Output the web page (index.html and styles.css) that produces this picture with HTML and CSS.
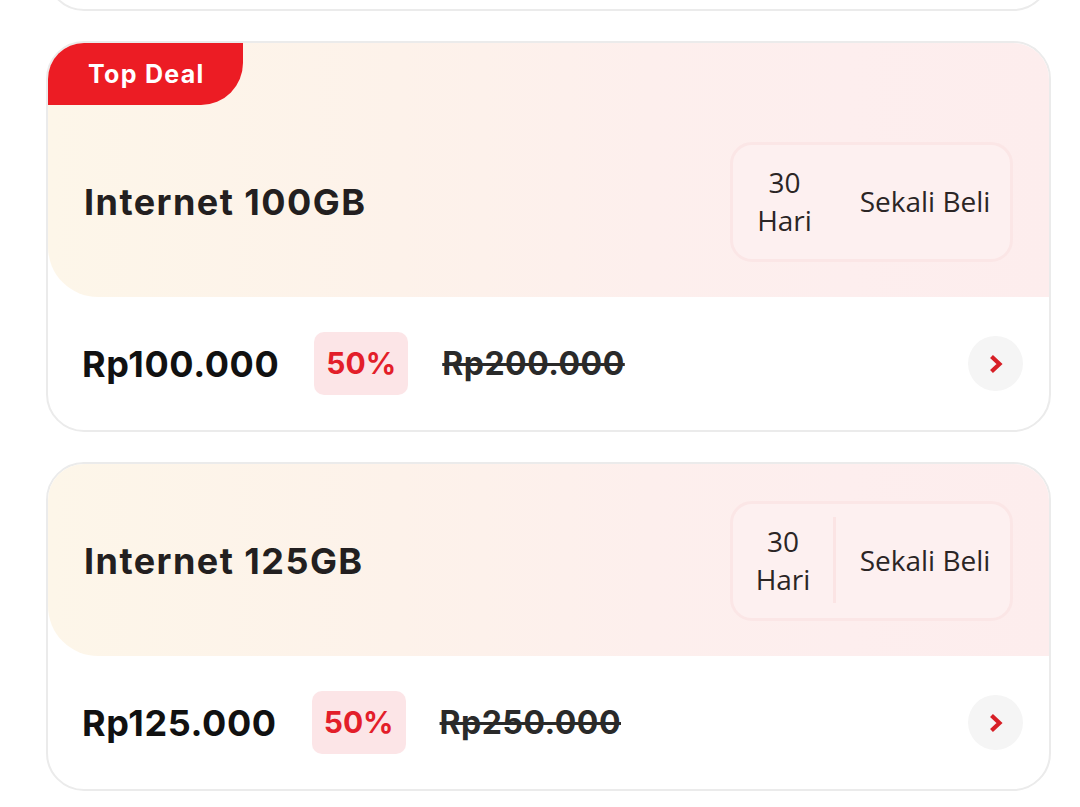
FILE: index.html
```html
<!DOCTYPE html>
<html lang="id">
<head>
<meta charset="utf-8">
<title>Paket Internet</title>
<link rel="stylesheet" href="styles.css">
</head>
<body>
<div class="list">
  <div class="card card-prev"></div>

  <div class="card">
    <div class="head">
      <div class="badge">Top Deal</div>
      <div class="head-row">
        <h2 class="title">Internet 100GB</h2>
        <div class="info">
          <div class="info-col info-days">30<br>Hari</div>
          <div class="info-col info-type">Sekali Beli</div>
        </div>
      </div>
    </div>
    <div class="foot">
      <span class="price">Rp100.000</span>
      <span class="disc">50%</span>
      <span class="old">Rp200.000</span>
      <button class="go" aria-label="Detail">
        <svg width="16" height="20" viewBox="0 0 16 20"><path d="M3.5 2.5 L11.5 10 L3.5 17.5" fill="none" stroke="#d71f26" stroke-width="4.2" stroke-linejoin="miter"/></svg>
      </button>
    </div>
  </div>

  <div class="card">
    <div class="head">
      <div class="head-row">
        <h2 class="title">Internet 125GB</h2>
        <div class="info">
          <div class="info-col info-days info-divided">30<br>Hari</div>
          <div class="info-col info-type">Sekali Beli</div>
        </div>
      </div>
    </div>
    <div class="foot">
      <span class="price">Rp125.000</span>
      <span class="disc">50%</span>
      <span class="old">Rp250.000</span>
      <button class="go" aria-label="Detail">
        <svg width="16" height="20" viewBox="0 0 16 20"><path d="M3.5 2.5 L11.5 10 L3.5 17.5" fill="none" stroke="#d71f26" stroke-width="4.2" stroke-linejoin="miter"/></svg>
      </button>
    </div>
  </div>
</div>
</body>
</html>
```

FILE: styles.css
```css
* { box-sizing: border-box; }

body {
  margin: 0;
  background: #ffffff;
  font-family: "Inter", "Liberation Sans", sans-serif;
  overflow: hidden;
}

.list {
  display: flex;
  flex-direction: column;
  gap: 30px;
  padding: 0 29px 0 46px;
}

.card {
  border: 2px solid #ebebeb;
  border-radius: 38px;
  overflow: hidden;
  background: #ffffff;
}

.card-prev {
  height: 100px;
  margin-top: -89px;
}

.head {
  background: linear-gradient(90deg, #fdf6e9 0%, #fdf2ea 35%, #fdefed 60%, #fdeeee 80%, #fdeded 100%);
  border-bottom-left-radius: 50px;
}

.badge {
  width: 195px;
  height: 62px;
  background: #ec1c24;
  color: #ffffff;
  font-weight: 700;
  font-size: 25px;
  line-height: 62px;
  padding-left: 40px;
  border-bottom-right-radius: 42px;
  letter-spacing: 1.3px;
}

.head-row {
  display: flex;
  align-items: center;
  justify-content: space-between;
  padding: 37px 36px 35px 36px;
}

.title {
  margin: 0;
  font-size: 36px;
  font-weight: 700;
  color: #231f20;
  letter-spacing: 1.45px;
}

.info {
  display: flex;
  height: 120px;
  border: 3px solid #fbe6e6;
  border-radius: 22px;
  background: #fdf0f0;
  font-family: "Open Sans", "Noto Sans", sans-serif;
  font-size: 28px;
  color: #2b2525;
  padding: 13px 0 15px;
}

.info-col {
  display: flex;
  align-items: center;
  justify-content: center;
  text-align: center;
  line-height: 38px;
}

.info-days {
  width: 103px;
}

.info-type {
  width: 174px;
  padding-left: 4px;
}

.info-divided {
  border-right: 3px solid #fbe4e4;
}

.foot {
  display: flex;
  align-items: center;
  height: 133px;
  padding: 0 26px 0 34px;
}

.price {
  font-size: 36px;
  font-weight: 700;
  color: #111111;
  letter-spacing: 0.6px;
}

.disc {
  margin-left: 35px;
  height: 63px;
  line-height: 63px;
  padding: 0 12px;
  border-radius: 10px;
  background: #fce5e7;
  color: #e31e2a;
  font-size: 30px;
  font-weight: 700;
}

.old {
  margin-left: 34px;
  font-size: 32px;
  font-weight: 700;
  color: #2a2a2a;
  letter-spacing: 0.5px;
  text-decoration: line-through;
  text-decoration-thickness: 3px;
}

.go {
  margin-left: auto;
  width: 55px;
  height: 55px;
  border: none;
  border-radius: 50%;
  background: #f5f5f5;
  display: flex;
  align-items: center;
  justify-content: center;
  padding: 0;
}
```
